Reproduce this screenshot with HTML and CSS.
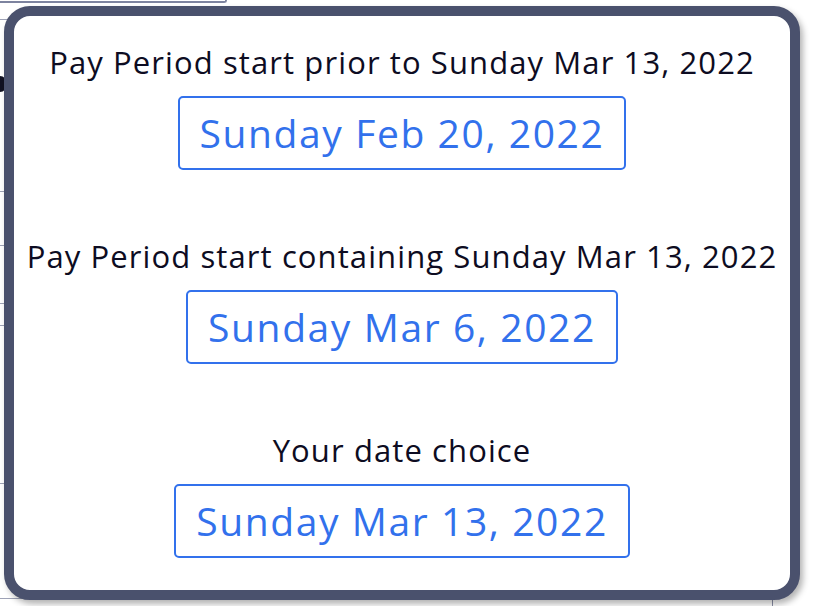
FILE: index.html
```html
<!DOCTYPE html>
<html lang="en">
<head>
<meta charset="utf-8">
<title>Pay Period</title>
<link rel="stylesheet" href="styles.css">
</head>
<body>
<div class="page">
  <div class="topbox"></div>
  <div class="row r1"></div>
  <div class="row r2"><span class="dot"></span></div>
  <div class="row r3"></div>
  <div class="row r4"></div>
  <div class="row r5"></div>
  <div class="row r6"></div>
  <div class="row r7"></div>
  <div class="vline"></div>
</div>
<div class="dialog">
  <section class="choice">
    <p class="label">Pay Period start prior to Sunday Mar 13, 2022</p>
    <button class="date">Sunday Feb 20, 2022</button>
  </section>
  <section class="choice">
    <p class="label">Pay Period start containing Sunday Mar 13, 2022</p>
    <button class="date">Sunday Mar 6, 2022</button>
  </section>
  <section class="choice">
    <p class="label">Your date choice</p>
    <button class="date">Sunday Mar 13, 2022</button>
  </section>
</div>
</body>
</html>
```
FILE: styles.css
```css
* { box-sizing: border-box; }
html, body { margin: 0; padding: 0; background: #ffffff; }
body {
  width: 824px;
  height: 606px;
  overflow: hidden;
  position: relative;
  font-family: "Open Sans", sans-serif;
}
.page { position: relative; width: 824px; height: 606px; }
.topbox {
  width: 227px;
  height: 3px;
  border-bottom: 2px solid #7d839f;
  border-right: 2px solid #7d839f;
  border-bottom-right-radius: 3px;
}
.row { width: 420px; border-bottom: 1px solid #9ea2b6; }
.r1 { height: 17px; }
.r2 { height: 172px; padding-top: 56px; }
.r3 { height: 54px; }
.r4 { height: 58px; }
.r5 { height: 22px; }
.r6 { height: 158px; }
.r7 { height: 115px; }
.dot {
  display: block;
  width: 14px;
  height: 16px;
  margin-left: -7px;
  border-radius: 50%;
  background: #111122;
}
.vline {
  position: absolute;
  left: 772px;
  top: 596px;
  width: 1px;
  height: 10px;
  background: #8a8fa6;
}
.dialog {
  position: absolute;
  left: 4px;
  top: 6px;
  width: 796px;
  height: 594px;
  background: #ffffff;
  border: 10px solid #4a516d;
  border-radius: 26px;
  box-shadow: 3px 4px 6px rgba(0, 0, 0, 0.3);
  display: flex;
  flex-direction: column;
  align-items: center;
  padding-top: 25px;
  gap: 65px;
}
.choice {
  display: flex;
  flex-direction: column;
  align-items: center;
  gap: 13px;
}
.label {
  margin: 0;
  font-size: 31px;
  line-height: 42px;
  letter-spacing: 1.1px;
  color: #0d0c22;
  white-space: nowrap;
}
.date {
  font-family: inherit;
  font-size: 39px;
  line-height: 70px;
  height: 74px;
  padding: 0 20px;
  letter-spacing: 1.6px;
  color: #3271ec;
  background: #ffffff;
  border: 2px solid #3271ec;
  border-radius: 5px;
  white-space: nowrap;
}
```
